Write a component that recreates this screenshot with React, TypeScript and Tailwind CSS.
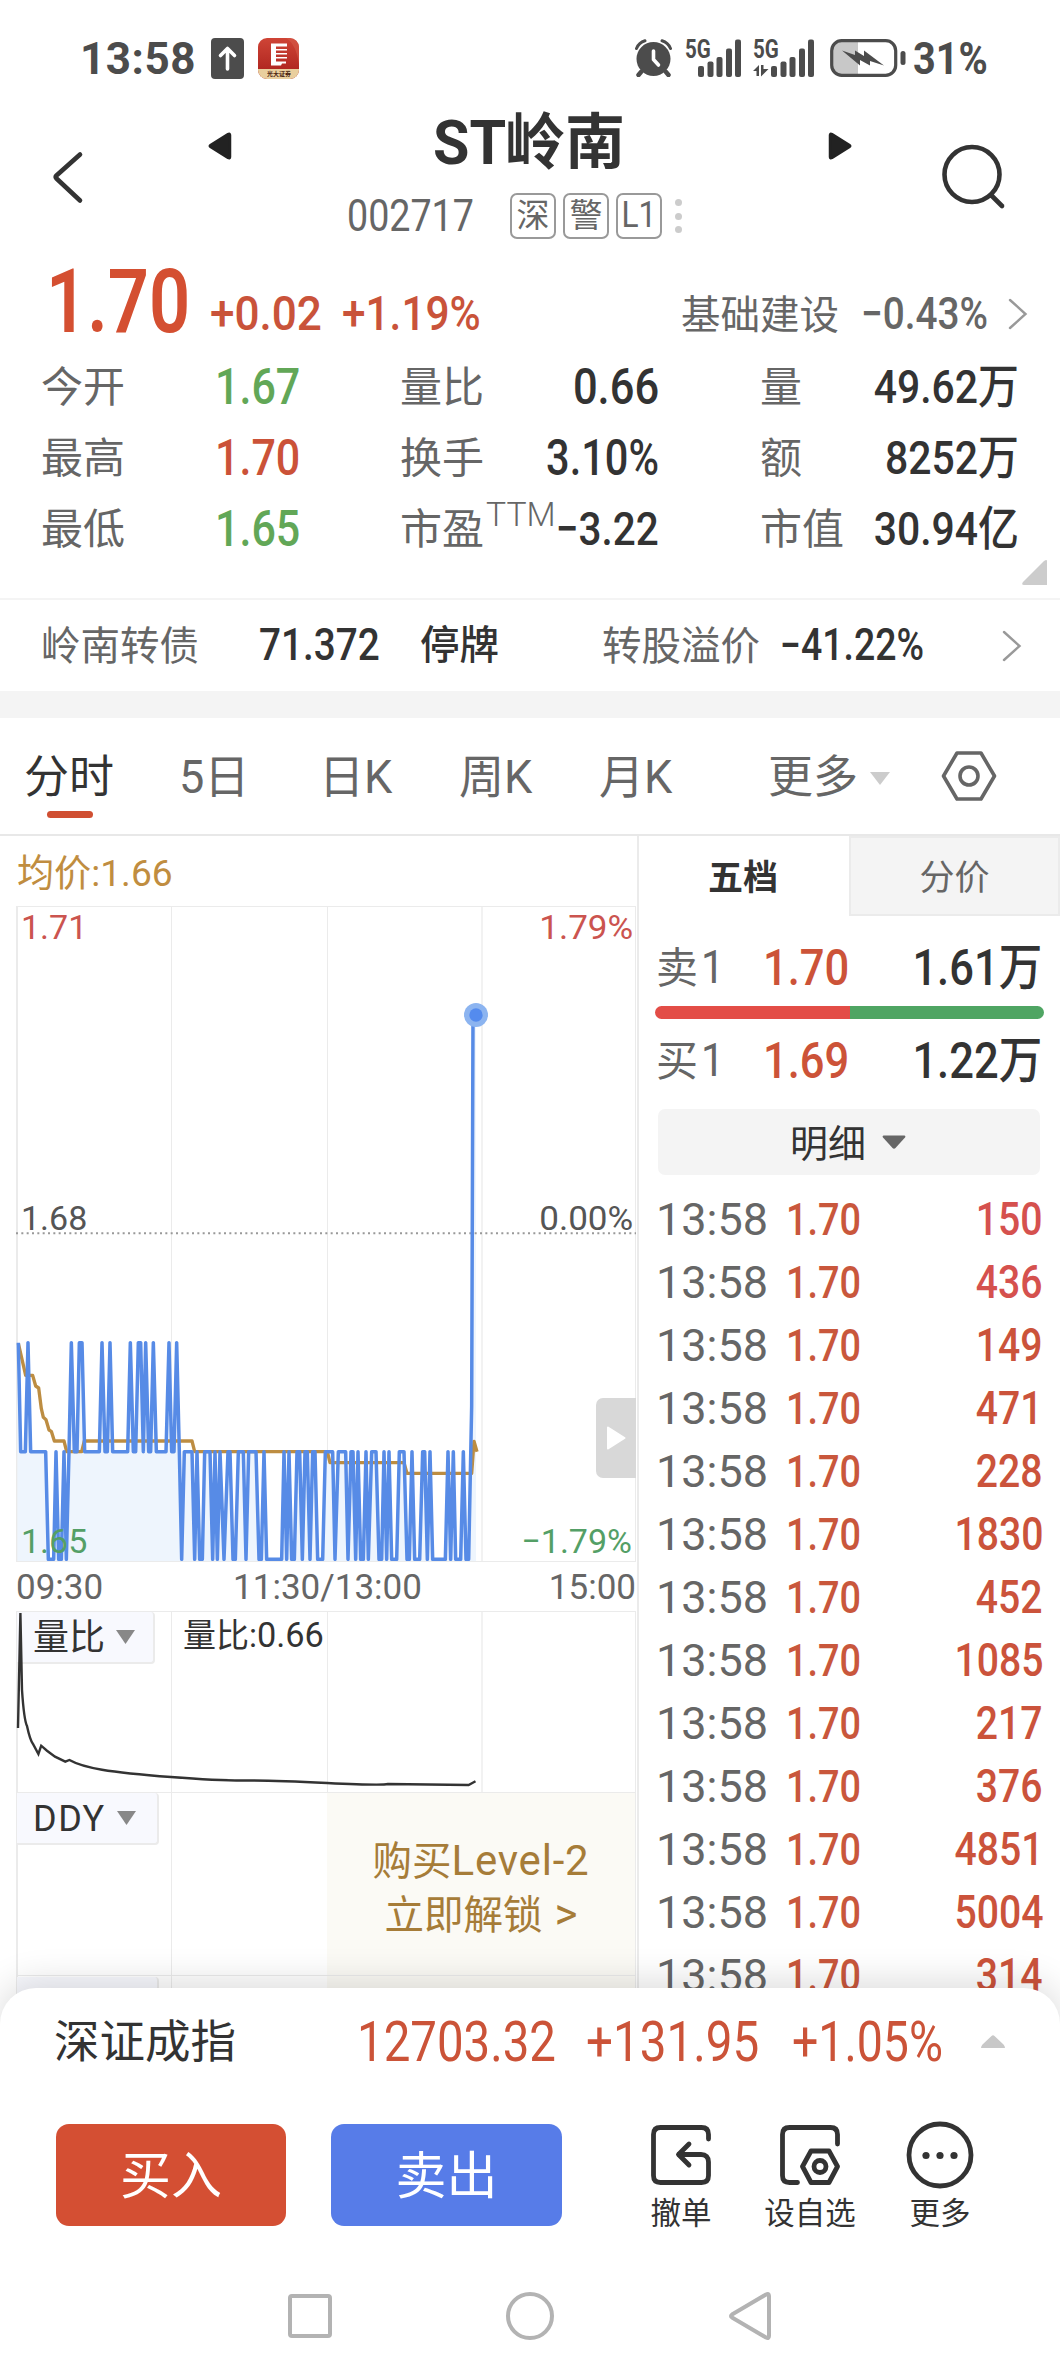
import type { ReactNode } from 'react'
import clsx from 'clsx'

interface NumProps {
  children: ReactNode
  className?: string
  right?: boolean
}

// Slightly condensed figures used for prices and volumes
function Num({ children, className, right }: NumProps) {
  return (
    <div className={clsx('flex whitespace-nowrap', right && 'justify-end')}>
      <span
        className={clsx(
          'inline-block whitespace-pre',
          right ? 'origin-right' : 'origin-left',
          className
        )}
      >
        {children}
      </span>
    </div>
  )
}

function StatusBar() {
  return (
    <div className="flex h-[100px] items-center pt-4 pl-[80px] text-[#4c4c4c]">
      <div className="w-[131px] pt-[2px] text-[44px] font-bold tracking-[0.5px]">13:58</div>
      <svg className="h-[41px] w-[33px]" viewBox="0 0 33 41">
        <rect width="33" height="41" rx="4" fill="#4c4c4c" />
        <path d="M16.5 31V11M9.5 17.5L16.5 10.5L23.5 17.5" fill="none" stroke="#fff" strokeWidth="3.6" strokeLinecap="round" strokeLinejoin="round" />
      </svg>
      <BrokerLogo />
      <svg className="ml-[336px] h-[38px] w-[37px]" viewBox="0 0 37 38">
        <circle cx="18.5" cy="20" r="17" fill="#4c4c4c" />
        <path d="M1.5 9.5A13 13 0 0 1 10 1.8M27 1.8A13 13 0 0 1 35.5 9.5" fill="none" stroke="#4c4c4c" strokeWidth="3" strokeLinecap="round" />
        <path d="M6 33L3.5 36M31 33L33.5 36" stroke="#4c4c4c" strokeWidth="4.5" strokeLinecap="round" />
        <path d="M18.5 12V20.5L23.5 26" fill="none" stroke="#fff" strokeWidth="3.6" strokeLinecap="round" strokeLinejoin="round" />
      </svg>
      <Signal className="ml-[13px] w-[57px]" bars={[[13, 11], [22.5, 15.5], [31.5, 20], [41, 28.5], [50, 37.5]]} />
      <Signal className="ml-[11px] w-[62px]" arrows bars={[[18, 11], [27.5, 15.5], [36.5, 20], [46, 28.5], [55, 37.5]]} />
      <svg className="ml-[15px] h-[38px] w-[77px]" viewBox="0 0 77 38">
        <path d="M11 2H28V36H11Q2 36 2 27V11Q2 2 11 2Z" fill="#c8c8c8" />
        <rect x="1.7" y="1.7" width="64" height="34.6" rx="10" fill="none" stroke="#4c4c4c" strokeWidth="3.2" />
        <rect x="70.5" y="12" width="5" height="14" rx="2.5" fill="#4c4c4c" />
        <path d="M12 11.5L25 16V11.5L34 17V11.5L54 26.5L40 22V26.5L30 21V26.5Z" fill="#4c4c4c" />
      </svg>
      <div className="ml-[6px] origin-left scale-x-[0.9] pt-[2px] text-[44px] font-bold">31%</div>
    </div>
  )
}

function BrokerLogo() {
  return (
    <div className="relative ml-[14px] flex h-[41px] w-[41px] flex-col overflow-hidden rounded-[9px] bg-linear-to-b from-[#cf4436] to-[#a81c1a]">
      <svg className="h-[31px] w-[41px]" viewBox="0 0 41 31">
        <path d="M28 0Q38 6 41 26V8Q38 0 32 0Z" fill="#d65a4a" opacity="0.6" />
        <path d="M13 5.5H29V8.5H18V11H29V12.5H18V15H29V16.5H18V19H29V20.5H18V23.5H28V25.5H24L23 27.5H13Z" fill="#fff" />
      </svg>
      <div className="flex h-[10px] items-center justify-center bg-[#e9cf9e]">
        <span className="scale-[0.6] text-[10px] leading-none font-bold whitespace-nowrap text-[#4a2410]">光大证券</span>
      </div>
    </div>
  )
}

function Signal({ bars, arrows, className }: { bars: number[][]; arrows?: boolean; className: string }) {
  return (
    <div className={clsx('relative h-[38px]', className)}>
      <span className="absolute -top-[2px] left-0 origin-left scale-x-[0.79] text-[26px] leading-[25px] font-bold">5G</span>
      <svg className="h-full w-full overflow-visible">
        {bars.map(([x, h]) => (
          <rect key={x} x={x} y={38 - h} width="6" height={h} rx="2" fill="#4c4c4c" />
        ))}
        {arrows && <path d="M0 32L6 26V37H3.5V32ZM8 26H10.5V30H15.5L8 37.5Z" fill="#4c4c4c" />}
      </svg>
    </div>
  )
}

function Header() {
  return (
    <div className="flex h-[152px] items-start">
      <svg className="mt-[49px] ml-[51px] h-[56px] w-[34px]" viewBox="0 0 34 56">
        <path d="M29 5.5L5.5 26.5Q4 28 5.5 29.5L29 51.5" fill="none" stroke="#333" strokeWidth="4.6" strokeLinecap="round" />
      </svg>
      <svg className="mt-[31px] ml-[123px] h-[30px] w-6" viewBox="0 0 24 30">
        <path d="M2.5 14L20 3Q22 2 22 4V26Q22 28 20 27L2.5 16Q1 15 2.5 14Z" fill="#222" stroke="#222" strokeWidth="2.5" strokeLinejoin="round" />
      </svg>
      <div className="flex w-[596px] flex-col">
        <div className="flex h-20 items-center pt-[7px] pl-[201px] text-[61px] font-bold text-[#333]">
          <span className="inline-block w-[72px] origin-left scale-x-[0.97]">ST</span>
          <span className="origin-left scale-x-[0.985]">岭南</span>
        </div>
        <div className="flex h-[72px] items-center text-[#666]">
          <span className="ml-[115px] w-[163px] origin-left scale-x-[0.865] pt-[2px] text-[43.5px] whitespace-nowrap">002717</span>
          <div className="flex gap-[7px] text-[33px]">
            <span className="flex h-[46px] w-[46px] items-center justify-center rounded-[7px] border-2 border-[#999]">深</span>
            <span className="flex h-[46px] w-[46px] items-center justify-center rounded-[7px] border-2 border-[#999]">警</span>
            <span className="flex h-[46px] w-[46px] items-center justify-center rounded-[7px] border-2 border-[#999] text-[36px]">
              <span className="scale-x-[0.88]">L1</span>
            </span>
          </div>
          <div className="ml-[13px] flex flex-col gap-[6.5px]">
            <i className="h-[7px] w-[7px] rounded-full bg-[#ccc]" />
            <i className="h-[7px] w-[7px] rounded-full bg-[#ccc]" />
            <i className="h-[7px] w-[7px] rounded-full bg-[#ccc]" />
          </div>
        </div>
      </div>
      <svg className="mt-[31px] h-[30px] w-6" viewBox="0 0 24 30">
        <path d="M21.5 14L4 3Q2 2 2 4V26Q2 28 4 27L21.5 16Q23 15 21.5 14Z" fill="#222" stroke="#222" strokeWidth="2.5" strokeLinejoin="round" />
      </svg>
      <svg className="mt-[43px] ml-[88px] h-[68px] w-[68px]" viewBox="0 0 68 68">
        <circle cx="32" cy="31.5" r="27.5" fill="none" stroke="#333" strokeWidth="4.6" />
        <path d="M51.5 52.5L62 63" stroke="#333" strokeWidth="4.6" strokeLinecap="round" />
      </svg>
    </div>
  )
}

function Chevron({ className }: { className?: string }) {
  return (
    <svg className={clsx('h-8 w-5', className)} viewBox="0 0 20 32">
      <path d="M2 2L17.5 16L2 30" fill="none" stroke="#999" strokeWidth="2.4" strokeLinecap="round" />
    </svg>
  )
}

function PriceRow() {
  return (
    <div className="grid h-[98px] grid-cols-[210px_132px_339px_180px_147px_auto] items-center text-[#c9533a]">
      <div className="pt-[2px] pl-[46px]">
        <Num className="scale-x-[0.815] text-[88.5px] leading-none font-semibold text-[#d44f31]">1.70</Num>
      </div>
      <div className="pt-[26px]"><Num className="scale-x-[0.9] text-[49px] font-medium">+0.02</Num></div>
      <div className="pt-[26px]"><Num className="scale-x-[0.865] text-[49px] font-medium">+1.19%</Num></div>
      <div className="pt-[29px] text-[39.5px] text-[#666]">基础建设</div>
      <div className="pt-[26px] text-[#666]"><Num className="scale-x-[0.86] text-[45px] font-medium">−0.43%</Num></div>
      <div className="pt-[26px]"><Chevron /></div>
    </div>
  )
}

const stats = [
  { a: ['今开', '1.67', 'text-[#62a757]'], b: ['量比', '0.66', 'scale-x-[0.87] text-[50px]'], c: ['量', '49.62万'] },
  { a: ['最高', '1.70', 'text-[#cb5238]'], b: ['换手', '3.10%', 'scale-x-[0.83] text-[50px]'], c: ['额', '8252万'] },
  { a: ['最低', '1.65', 'text-[#62a757]'], b: ['市盈', '−3.22', 'scale-x-[0.86] text-[47px]'], c: ['市值', '30.94亿'] }
]

function Stats() {
  return (
    <div className="flex h-[250px] flex-col border-b-2 border-[#f4f4f4]">
      {stats.map(({ a, b, c }) => (
        <div key={a[0]} className="grid h-[71px] grid-cols-[174px_185px_259px_101px_259px] items-center pt-[3px] pl-[41px] text-[42px] whitespace-nowrap text-[#666]">
          <div className="pt-[3px]">{a[0]}</div>
          <div className={a[2]}><Num className="scale-x-[0.86] text-[50px] font-medium">{a[1]}</Num></div>
          <div className="flex items-center">
            <span className="w-[84px] flex-none pt-[3px]">{b[0]}</span>
            {b[0] === '市盈' && <span className="-mt-[28px] w-[70px] flex-none origin-left scale-x-[1.02] pl-[2px] text-[33px] leading-none font-light">TTM</span>}
            <div className="min-w-0 flex-1 text-[#333]">
              <Num right className={clsx('font-medium', b[2])}>{b[1]}</Num>
            </div>
          </div>
          <div />
          <div className="flex items-center">
            <span className="flex-none pt-[3px]">{c[0]}</span>
            <div className="min-w-0 flex-1 text-[#333]">
              <Num right className="scale-x-[0.87] text-[47px] font-medium">{c[1]}</Num>
            </div>
          </div>
        </div>
      ))}
      <div className="-mt-[3px] flex justify-end pr-[13px]">
        <svg className="h-[25px] w-[25px]" viewBox="0 0 25 25">
          <path d="M25 1V25H2Q-1 25 1 22L22 1Q25 -1 25 1Z" fill="#ccc" />
        </svg>
      </div>
    </div>
  )
}

function BondRow() {
  return (
    <div className="grid h-[91px] grid-cols-[218px_161px_182px_178px_222px_auto] items-center pl-[41px] text-[39.5px] text-[#666]">
      <div className="pt-[3px]">岭南转债</div>
      <div className="pt-px text-[#333]"><Num className="scale-x-[0.89] text-[43.5px] font-medium">71.372</Num></div>
      <div className="pt-px font-medium text-[#333]">停牌</div>
      <div className="pt-[3px]">转股溢价</div>
      <div className="pt-px text-[#333]"><Num className="scale-x-[0.86] text-[43.5px] font-medium">−41.22%</Num></div>
      <Chevron />
    </div>
  )
}

const tabs = ['5日', '日K', '周K', '月K']

function PeriodTabs() {
  return (
    <div className="flex h-[118px] items-center border-b-2 border-[#e8e8e8] pt-1 pl-[24px] text-[45px] text-[#666]">
      <div className="relative w-[155px] text-[#333]">
        分时
        <i className="absolute -bottom-[13px] left-[23px] h-[7px] w-[46px] rounded-full bg-[#d04f32]" />
      </div>
      {tabs.map((tab) => (
        <div key={tab} className="w-[140px] origin-left scale-x-[0.98] text-[46px]">{tab}</div>
      ))}
      <div className="ml-[29px]">更多</div>
      <svg className="ml-[12px] h-[13px] w-5" viewBox="0 0 20 13">
        <path d="M0 0H20L10 13Z" fill="#ccc" />
      </svg>
      <svg className="-mt-1 ml-[51px] h-[52px] w-[56px]" viewBox="0 0 56 52">
        <path d="M16 3H40L53.5 26L40 49H16L2.5 26Z" fill="none" stroke="#666" strokeWidth="3.6" strokeLinejoin="round" />
        <circle cx="28" cy="26" r="9" fill="none" stroke="#666" strokeWidth="3.6" />
      </svg>
    </div>
  )
}

// y of each price level inside the 1860x1965 plot
const LEVEL: Record<string, number> = { H: 1310, M: 1637, L: 1960 }

const ticks =
  '55H 62M 76M 84H 92M 137M 145L 161L 168M 176L 184L 192M 199L 207M 214H 223M 231M 238H 246H 254M 298M 306H 315M 322M 330H 338M 383M 391H 400M 407M 415H 422H 430M 437H 446M 452M 460H 469M 498M 507H 515M 522M 530H 538M 545L 553M 576M 584L 591M 599L 607L 614M 630M 638L 645M 652L 660M 672L 684M 690M 699L 706L 715M 730M 738L 746M 768M 777L 784L 792M 800L 845L 852M 860L 867M 875L 883L 891M 899M 907L 915M 922M 930L 938M 945M 953L 968L 976M 998M 1005L 1015M 1037M 1044L 1053M 1059M 1067L 1074M 1082L 1090L 1098M 1105L 1115M 1128M 1137L 1145L 1152M 1160L 1167M 1175L 1190L 1198M 1212M 1221L 1228L 1236M 1244L 1259L 1268M 1274M 1282L 1290M 1298L 1336L 1344M 1352L 1360M 1367L 1375L 1382L 1390M 1398L 1406L'

const pricePath = 'M' + ticks.split(' ').map((t) => `${t.slice(0, -1)} ${LEVEL[t.slice(-1)]}`).join('L') + 'L1415 1500L1419 327L1428 327'

const avgPath =
  'M55 1312L77 1408H98L107 1440L116 1446L124 1508L130 1534L138 1541L147 1572L154 1576L163 1605H192L200 1637H245L253 1605H576L584 1637H982L990 1670H1212L1221 1702H1415L1422 1606L1431 1637'

function GridLines() {
  return (
    <>
      <i className="absolute inset-y-0 left-[153px] w-px bg-[#ebebeb]" />
      <i className="absolute inset-y-0 left-[309px] w-px bg-[#ebebeb]" />
      <i className="absolute inset-y-0 left-[463px] w-[2px] bg-[#f2f2f2]" />
    </>
  )
}

function PriceChart() {
  return (
    <div className="relative h-[656px] border border-l-2 border-[#ebebeb] text-[34px] leading-[36px]">
      <GridLines />
      <svg className="absolute -top-px -left-[2px] h-[655px] w-[620px]" viewBox="48 0 1860 1965">
        <path d={`${pricePath}V1965H52V1310Z`} fill="#eef5fd" />
        <path d="M48 982H1908" stroke="#999" strokeWidth="6" strokeDasharray="6 10" />
        <path d={avgPath} fill="none" stroke="#bd8d42" strokeWidth="10" strokeLinejoin="round" />
        <path d={pricePath} fill="none" stroke="#578be6" strokeWidth="10.5" strokeLinejoin="round" />
        <circle cx="1428" cy="327" r="36" fill="#8cb4f0" />
        <circle cx="1428" cy="327" r="20" fill="#548bee" />
      </svg>
      <span className="absolute top-[2px] left-[3px] origin-left text-[#cb544f]">1.71</span>
      <span className="absolute top-[2px] right-[2px] origin-right scale-x-[1.03] text-[#cb544f]">1.79%</span>
      <span className="absolute top-[293px] left-[3px] text-[#555]">1.68</span>
      <span className="absolute top-[293px] right-[2px] origin-right scale-x-[1.03] text-[#555]">0.00%</span>
      <span className="absolute bottom-[2px] left-[3px] text-[#549f66]">1.65</span>
      <span className="absolute right-[3px] bottom-[2px] text-[#549f66]">−1.79%</span>
      <button className="absolute top-[491px] -right-px flex h-20 w-10 items-center justify-center rounded-l-[7px] bg-[#d8d8d8]">
        <svg className="h-6 w-5" viewBox="0 0 20 24">
          <path d="M2 1.5L18.5 12L2 22.5Z" fill="#fff" stroke="#fff" strokeWidth="2" strokeLinejoin="round" />
        </svg>
      </button>
    </div>
  )
}

function IndicatorTag({ label, className }: { label: string; className: string }) {
  return (
    <div className={clsx('absolute top-0 -left-px flex h-[52px] items-center rounded-r-[4px] border-r-2 border-b-2 border-[#ebebeb] bg-[#f8f9fe] pt-[3px] pl-4 text-[36px] text-[#333]', className)}>
      {label}
      <svg className="-mt-[3px] ml-[11px] h-[14px] w-[19px]" viewBox="0 0 19 14">
        <path d="M0 0H19L9.5 14Z" fill="#888" />
      </svg>
    </div>
  )
}

function ChartPane() {
  return (
    <div className="w-[639px] flex-none border-r-2 border-[#ebebeb] pr-px pl-4">
      <div className="flex h-[70px] items-center pt-1 pl-px text-[#c08d40]">
        <span className="inline-block origin-left scale-x-[0.99] text-[37.5px]">均价:1.66</span>
      </div>
      <PriceChart />
      <div className="flex h-[49px] items-center justify-between pt-[2px] text-[35px] text-[#666]">
        <span>09:30</span>
        <span className="pl-[3px]">11:30/13:00</span>
        <span>15:00</span>
      </div>
      <div className="relative h-[182px] border border-l-2 border-[#ebebeb]">
        <GridLines />
        <IndicatorTag label="量比" className="w-[138px]" />
        <span className="absolute top-px left-[165px] text-[33px] leading-[46px] text-[#333]">
          量比:<span className="inline-block origin-left scale-x-[0.98] text-[35px]">0.66</span>
        </span>
        <svg className="absolute -top-px -left-[2px] h-[182px] w-[620px]" viewBox="16 1611 620 182">
          <path
            d="M18 1728L20.4 1613L22 1690Q24 1720 27 1726Q30 1740 33 1744L38.4 1754L41.2 1745.7L47 1750.7L55 1756.7L65.3 1761.7L69.4 1760Q80 1766 102 1769.7T171 1777T245 1780.5T327 1783T388 1784L468.6 1785L475.5 1781.3"
            fill="none"
            stroke="#333"
            strokeWidth="2.4"
          />
        </svg>
      </div>
      <div className="relative h-[183px] border border-t-0 border-l-2 border-[#ebebeb]">
        <GridLines />
        <IndicatorTag label="DDY" className="w-[142px] tracking-[1.5px]" />
        <div className="absolute inset-y-0 right-0 flex w-[308px] flex-col items-center bg-[#fbfaf5] pt-[41px] text-[39.5px] leading-[53px] text-[#a67c38]">
          <span>购买<span className="text-[42px] tracking-[0.8px]">Level-2</span></span>
          <span>立即解锁<span className="pl-[12px] text-[44px]">&gt;</span></span>
        </div>
      </div>
      <div className="relative h-[60px] border border-t-0 border-l-2 border-[#ebebeb]">
        <GridLines />
        <i className="absolute top-px -left-px h-[52px] w-[142px] rounded-r-[4px] border-r-2 border-[#ebebeb] bg-[#f8f9fe]" />
        <i className="absolute inset-y-0 right-0 w-[308px] bg-[#fbfaf5]" />
      </div>
    </div>
  )
}

const volumes = [150, 436, 149, 471, 228, 1830, 452, 1085, 217, 376, 4851, 5004, 314]

function QuoteRow({ side, price, volume }: { side: string; price: string; volume: string }) {
  return (
    <div className="grid h-[80px] grid-cols-[107px_100px_1fr] items-center pt-[3px] pr-[18px] pl-[17px] text-[42px] text-[#666]">
      <div className="whitespace-nowrap">
        {side}
        <span className="ml-[3px] inline-block origin-left scale-x-[0.9] text-[46px]">1</span>
      </div>
      <div className="text-[#cc5338]"><Num className="scale-x-[0.87] text-[50px] font-medium">{price}</Num></div>
      <div className="text-[#333]"><Num right className="scale-x-[0.87] text-[50px] font-medium">{volume}</Num></div>
    </div>
  )
}

function OrderBook() {
  return (
    <div className="min-w-0 flex-1">
      <div className="flex h-20 text-[35px]">
        <div className="flex w-[210px] items-center justify-center pt-[5px] pr-[2px] font-bold text-[#333]">五档</div>
        <div className="flex flex-1 items-center justify-center border-2 border-[#ebebeb] bg-[#f4f4f4] pt-[5px] text-[#666]">分价</div>
      </div>
      <div className="pt-[10px]"><QuoteRow side="卖" price="1.70" volume="1.61万" /></div>
      <div className="mx-4 flex h-[13px] overflow-hidden rounded-full">
        <i className="w-1/2 bg-[#e34d47]" />
        <i className="w-1/2 bg-[#4fa563]" />
      </div>
      <QuoteRow side="买" price="1.69" volume="1.22万" />
      <button className="mt-[10px] ml-[19px] flex h-[66px] w-[382px] items-center justify-center rounded-[7px] bg-[#f4f4f4] pr-[2px] text-[38px] text-[#333]">
        <span className="pt-[5px]">明细</span>
        <svg className="ml-4 h-[14px] w-6" viewBox="0 0 24 14">
          <path d="M1.5 0.5H22.5Q24 1 23 2.5L13.5 13Q12 14.5 10.5 13L1 2.5Q0 1 1.5 0.5Z" fill="#666" />
        </svg>
      </button>
      <div className="pt-[13.5px]">
        {volumes.map((volume, i) => (
          <div key={volume} className="grid h-[63px] grid-cols-[130px_100px_1fr] items-center px-[17px]">
            <span className="text-[45px] text-[#666]">13:58</span>
            <div className="text-[#c9573c]"><Num className="scale-x-[0.86] text-[44px] font-medium">1.70</Num></div>
            <div className={i < 2 ? 'text-[#d5514e]' : 'text-[#cb533b]'}>
              <Num right className="scale-x-[0.86] text-[45.5px] font-medium">{volume}</Num>
            </div>
          </div>
        ))}
      </div>
    </div>
  )
}

function CancelIcon() {
  return (
    <svg className="h-[60px] w-[60px]" viewBox="0 0 60 60" fill="none" stroke="#333" strokeWidth="4.8" strokeLinecap="round" strokeLinejoin="round">
      <path d="M57.5 14V9.5Q57.5 2.5 50.5 2.5H9.5Q2.5 2.5 2.5 9.5V50.5Q2.5 57.5 9.5 57.5H50.5Q57.5 57.5 57.5 50.5V37Q57.5 29.5 50 29.5H28" />
      <path d="M38 19L27.5 29.5L38 40" />
    </svg>
  )
}

function WatchlistIcon() {
  return (
    <svg className="h-[60px] w-[60px]" viewBox="0 0 60 60" fill="none" stroke="#333" strokeWidth="4.8" strokeLinecap="round" strokeLinejoin="round">
      <path d="M57.5 19V9.5Q57.5 2.5 50.5 2.5H9.5Q2.5 2.5 2.5 9.5V50.5Q2.5 57.5 9.5 57.5H17.5" />
      <path d="M31 26H49L57.5 41.5L49 57.5H31L22.5 41.5Z" />
      <circle cx="40" cy="41.5" r="6" />
    </svg>
  )
}

function MoreIcon() {
  return (
    <svg className="h-[68px] w-[68px]" viewBox="0 0 68 68" fill="#333">
      <circle cx="34" cy="34" r="31" fill="none" stroke="#333" strokeWidth="4.8" />
      <circle cx="20" cy="34.5" r="3.6" />
      <circle cx="34" cy="34.5" r="3.6" />
      <circle cx="48" cy="34.5" r="3.6" />
    </svg>
  )
}

function BottomSheet() {
  return (
    <div className="relative -mt-[48px] h-[388px] rounded-t-[36px] bg-white shadow-[0_-6px_36px_rgba(0,0,0,0.14)]">
      <div className="grid h-[106px] grid-cols-[303px_229px_206px_192px_auto] items-center pt-px pl-[54px] text-[45.5px] text-[#333]">
        <span className="pt-[3px]">深证成指</span>
        <div className="text-[#cb5338]"><Num className="scale-x-[0.862] text-[55px]">12703.32</Num></div>
        <div className="text-[#cb5338]"><Num className="scale-x-[0.865] text-[55px]">+131.95</Num></div>
        <div className="text-[#cb5338]"><Num className="scale-x-[0.845] text-[55px]">+1.05%</Num></div>
        <svg className="-ml-[3px] h-[13px] w-6" viewBox="0 0 24 13">
          <path d="M0 13Q0 11 1.5 9.5L10.5 1Q12 -0.5 13.5 1L22.5 9.5Q24 11 24 13Z" fill="#c8c8c8" />
        </svg>
      </div>
      <div className="flex h-[160px] items-start pt-[24px] pl-[56px]">
        <button className="mt-[6px] h-[102px] w-[230px] rounded-[13px] bg-[#d44f33] pt-[3px] text-[51px] text-white">买入</button>
        <button className="mt-[6px] ml-[45px] h-[102px] w-[231px] rounded-[13px] bg-[#577ce8] pt-[3px] text-[51px] text-white">卖出</button>
        <div className="ml-[69px] flex w-[100px] flex-col items-center text-[30.5px] leading-[44px] text-[#333]">
          <div className="flex h-[74px] items-center"><CancelIcon /></div>
          撤单
        </div>
        <div className="ml-[29px] flex w-[100px] flex-col items-center text-[30.5px] leading-[44px] text-[#333]">
          <div className="flex h-[74px] items-center"><WatchlistIcon /></div>
          设自选
        </div>
        <div className="ml-[30px] flex w-[100px] flex-col items-center text-[30.5px] leading-[44px] text-[#333]">
          <div className="flex h-[74px] items-center"><MoreIcon /></div>
          更多
        </div>
      </div>
      <div className="flex h-[124px] items-center pl-[288px]">
        <i className="h-11 w-11 rounded-[4px] border-4 border-[#b3b3b3]" />
        <i className="ml-[174px] h-12 w-12 rounded-full border-4 border-[#b3b3b3]" />
        <svg className="ml-[174px] h-[50px] w-[44px]" viewBox="0 0 44 50">
          <path d="M4 23.5L38 3.5Q41 2 41 5V45Q41 48 38 46.5L4 26.5Q2 25 4 23.5Z" fill="none" stroke="#b3b3b3" strokeWidth="4" strokeLinejoin="round" />
        </svg>
      </div>
    </div>
  )
}

export default function App() {
  return (
    <div className="flex h-[2376px] w-[1060px] flex-col overflow-hidden bg-white font-['Roboto','Noto_Sans_CJK_SC',sans-serif] leading-[1.2] [&>*]:flex-none">
      <StatusBar />
      <Header />
      <PriceRow />
      <Stats />
      <BondRow />
      <div className="h-[27px] bg-[#f4f4f4]" />
      <PeriodTabs />
      <div className="flex h-[1200px] overflow-hidden">
        <ChartPane />
        <OrderBook />
      </div>
      <BottomSheet />
    </div>
  )
}
